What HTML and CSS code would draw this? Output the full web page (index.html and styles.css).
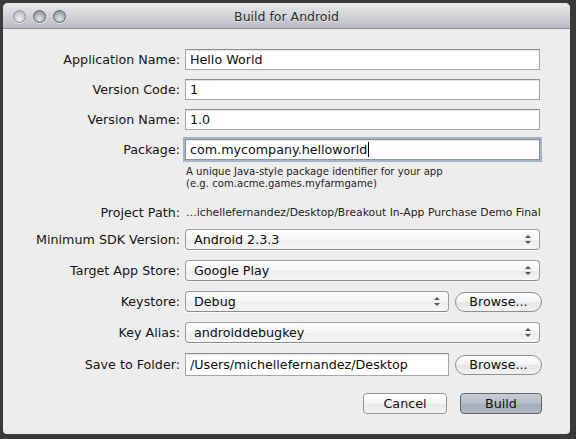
FILE: index.html
```html
<!DOCTYPE html>
<html>
<head>
<meta charset="utf-8">
<title>Build for Android</title>
<link rel="stylesheet" href="styles.css">
</head>
<body>
<div class="window">
  <div class="titlebar">
    <div class="lights">
      <span class="light light-close"></span>
      <span class="light"></span>
      <span class="light"></span>
    </div>
    <div class="title">Build for Android</div>
  </div>
  <div class="content">
    <div class="group group-text">
      <div class="row">
        <label class="label">Application Name:</label>
        <div class="field"><div class="input">Hello World</div></div>
      </div>
      <div class="row">
        <label class="label">Version Code:</label>
        <div class="field"><div class="input">1</div></div>
      </div>
      <div class="row">
        <label class="label">Version Name:</label>
        <div class="field"><div class="input">1.0</div></div>
      </div>
      <div class="row">
        <label class="label">Package:</label>
        <div class="field"><div class="input input-focus">com.mycompany.helloworld<span class="caret"></span></div></div>
      </div>
    </div>
    <div class="help">A unique Java-style package identifier for your app<br>(e.g. com.acme.games.myfarmgame)</div>
    <div class="row row-path">
      <label class="label">Project Path:</label>
      <div class="path">…ichellefernandez/Desktop/Breakout In-App Purchase Demo Final</div>
    </div>
    <div class="group group-popups">
      <div class="row">
        <label class="label">Minimum SDK Version:</label>
        <div class="field"><div class="popup">Android 2.3.3<span class="arrows"></span></div></div>
      </div>
      <div class="row">
        <label class="label">Target App Store:</label>
        <div class="field"><div class="popup">Google Play<span class="arrows"></span></div></div>
      </div>
      <div class="row">
        <label class="label">Keystore:</label>
        <div class="field field-split">
          <div class="popup">Debug<span class="arrows"></span></div>
          <button class="pill">Browse...</button>
        </div>
      </div>
      <div class="row">
        <label class="label">Key Alias:</label>
        <div class="field"><div class="popup">androiddebugkey<span class="arrows"></span></div></div>
      </div>
      <div class="row row-save">
        <label class="label">Save to Folder:</label>
        <div class="field field-split">
          <div class="input">/Users/michellefernandez/Desktop</div>
          <button class="pill">Browse...</button>
        </div>
      </div>
    </div>
    <div class="actions">
      <button class="btn">Cancel</button>
      <button class="btn btn-default">Build</button>
    </div>
  </div>
</div>
</body>
</html>
```

FILE: styles.css
```css
html, body {
  margin: 0;
  padding: 0;
}
body {
  width: 576px;
  height: 439px;
  background: #3a3a3a;
  font-family: "DejaVu Sans", "Liberation Sans", sans-serif;
  color: #1a1a1a;
  overflow: hidden;
}
.window {
  margin: 3px 6px 5px 3px;
  width: 567px;
  height: 431px;
  background: #ededed;
  border-radius: 5px 5px 4px 4px;
  overflow: hidden;
  display: flex;
  flex-direction: column;
}
.titlebar {
  height: 25px;
  flex: none;
  position: relative;
  background: linear-gradient(#e9e9e9, #d3d4d7 50%, #b9bcc3);
  border-bottom: 1px solid #8d8f94;
  display: flex;
  align-items: center;
  justify-content: center;
}
.lights {
  position: absolute;
  left: 10px;
  top: 7px;
  display: flex;
  gap: 7px;
}
.light {
  width: 13px;
  height: 13px;
  box-sizing: border-box;
  border-radius: 50%;
  border: 1px solid #5f6168;
  background: radial-gradient(circle at 50% 70%, #e4e6ea 0, #b5b8bf 45%, #7e8188 100%);
  box-shadow: 0 1px 0 rgba(255,255,255,0.6);
}
.light-close {
  border-color: #8f9197;
  background: radial-gradient(circle at 50% 70%, #f3f4f6 0, #cfd1d6 45%, #a5a8af 100%);
}
.title {
  font-size: 12.5px;
  color: #2b2b2b;
  text-shadow: 0 1px 0 rgba(255,255,255,0.5);
  margin-top: 2px;
}
.content {
  flex: 1;
  padding: 20px 30px 0 0;
  display: flex;
  flex-direction: column;
}
.group {
  display: flex;
  flex-direction: column;
}
.group-text {
  gap: 9px;
}
.group-popups {
  gap: 10px;
  margin-top: 6px;
}
.row {
  display: grid;
  grid-template-columns: 177px 1fr;
  column-gap: 5px;
  align-items: center;
  height: 21px;
}
.label {
  text-align: right;
  font-size: 12.7px;
  color: #141414;
  white-space: nowrap;
}
.field {
  height: 21px;
  display: flex;
}
.field-split {
  gap: 6px;
}
.field-split .popup,
.field-split .input {
  width: 264px;
  flex: none;
}
.input {
  flex: 1;
  box-sizing: border-box;
  height: 21px;
  background: #fff;
  border: 1px solid #a6a6a6;
  border-top-color: #8e8e8e;
  box-shadow: inset 0 1px 1px rgba(0,0,0,0.12);
  font-size: 12.7px;
  line-height: 19px;
  padding: 0 4px;
  color: #0d0d0d;
  white-space: nowrap;
  overflow: hidden;
}
.row-save .field,
.row-save .input {
  height: 23px;
}
.row-save .input {
  line-height: 21px;
}
.input-focus {
  border-color: #8593a8;
  box-shadow: 0 0 0 2px #a9b3c2, inset 0 1px 1px rgba(0,0,0,0.1);
}
.caret {
  display: inline-block;
  width: 1px;
  height: 15px;
  background: #000;
  vertical-align: -3px;
  margin-left: 1px;
}
.help {
  margin: 6px 0 0 183px;
  font-size: 10.1px;
  line-height: 12px;
  color: #1e1e1e;
}
.row-path {
  margin-top: 12px;
}
.path {
  font-size: 10.8px;
  color: #1e1e1e;
  white-space: nowrap;
  padding-left: 1px;
}
.popup {
  flex: 1;
  position: relative;
  box-sizing: border-box;
  height: 21px;
  border: 1px solid #9c9c9c;
  border-bottom-color: #8a8a8a;
  border-radius: 4px;
  background: linear-gradient(#ffffff, #f5f5f5 50%, #ececec 51%, #f6f6f6);
  box-shadow: 0 1px 0 rgba(255,255,255,0.7);
  font-size: 12.7px;
  line-height: 19px;
  padding: 0 8px;
  color: #0d0d0d;
}
.arrows {
  position: absolute;
  right: 8px;
  top: 5px;
  width: 6px;
  height: 9px;
}
.arrows::before,
.arrows::after {
  content: "";
  position: absolute;
  left: 0;
  border-left: 3px solid transparent;
  border-right: 3px solid transparent;
}
.arrows::before {
  top: 0;
  border-bottom: 3px solid #555;
}
.arrows::after {
  bottom: 0;
  border-top: 3px solid #555;
}
button {
  font-family: inherit;
  margin: 0;
}
.pill {
  width: 87px;
  flex: none;
  height: 20px;
  align-self: center;
  border: 1px solid #8e8e8e;
  border-radius: 10px;
  background: linear-gradient(#ffffff, #f3f3f3 50%, #e6e6e6 51%, #f2f2f2);
  font-size: 12.7px;
  color: #111;
  padding: 0;
  line-height: 18px;
}
.actions {
  margin-top: 19px;
  display: flex;
  justify-content: flex-end;
  gap: 13px;
  margin-right: -2px;
}
.btn {
  height: 21px;
  padding: 0;
  border: 1px solid #959595;
  border-radius: 4px;
  background: linear-gradient(#ffffff, #f4f4f4 50%, #e8e8e8 51%, #f4f4f4);
  font-size: 12.7px;
  line-height: 19px;
  color: #111;
  width: 84px;
}
.btn-default {
  width: 82px;
  border-color: #5f6570;
  background: linear-gradient(#c8ced8, #b5bcc8 50%, #a3abb8 51%, #b3bac6);
  color: #111;
}
```
